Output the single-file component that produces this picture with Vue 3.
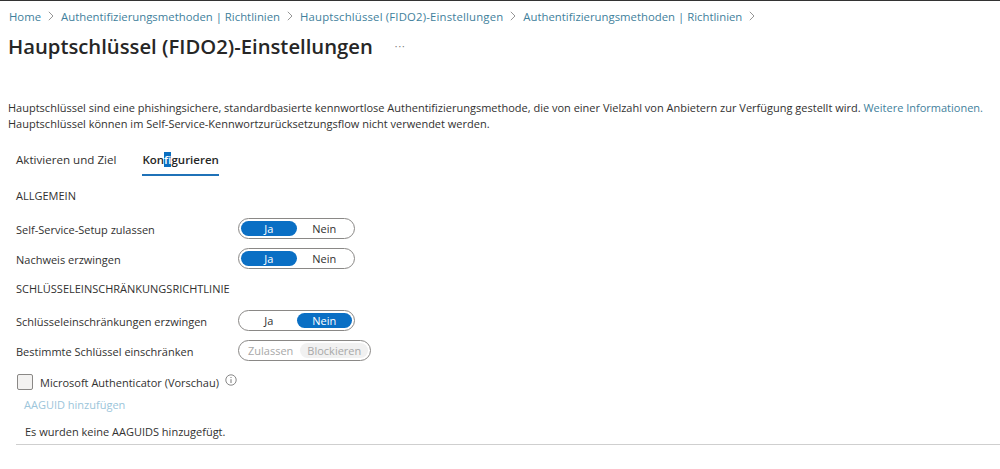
<template>
  <div class="page">
    <nav class="crumbs">
      <template v-for="c in crumbs" :key="c.id">
        <a class="crumb">{{ c.label }}</a>
        <svg class="chev" width="6" height="10" viewBox="0 0 6 10"><path d="M0.8 0.8 L5 5 L0.8 9.2" fill="none" stroke="#8a8a8a" stroke-width="0.9" /></svg>
      </template>
    </nav>
    <div class="title-row">
      <h1>Hauptschlüssel (FIDO2)-Einstellungen</h1>
      <span class="more">···</span>
    </div>
    <p class="intro">
      Hauptschlüssel sind eine phishingsichere, standardbasierte kennwortlose Authentifizierungsmethode, die von einer Vielzahl von Anbietern zur Verfügung gestellt wird.
      <a>Weitere Informationen.</a><br />
      Hauptschlüssel können im Self-Service-Kennwortzurücksetzungsflow nicht verwendet werden.
    </p>
    <div class="tabs">
      <div class="tab">Aktivieren und Ziel</div>
      <div class="tab active">Kon<span class="sel">f</span>igurieren</div>
    </div>
    <div class="section first">ALLGEMEIN</div>
    <div class="row" v-for="r in general" :key="r">
      <span class="label">{{ r }}</span>
      <div class="toggle">
        <span class="opt on">Ja</span><span class="opt">Nein</span>
      </div>
    </div>
    <div class="section second">SCHLÜSSELEINSCHRÄNKUNGSRICHTLINIE</div>
    <div class="row">
      <span class="label">Schlüsseleinschränkungen erzwingen</span>
      <div class="toggle">
        <span class="opt">Ja</span><span class="opt on">Nein</span>
      </div>
    </div>
    <div class="row">
      <span class="label">Bestimmte Schlüssel einschränken</span>
      <div class="toggle disabled">
        <span class="opt">Zulassen</span><span class="opt on">Blockieren</span>
      </div>
    </div>
    <div class="check-row">
      <span class="box"></span>
      <span class="check-label">Microsoft Authenticator (Vorschau)</span>
      <svg class="info" width="12" height="12" viewBox="0 0 12 12">
        <circle cx="6" cy="6" r="5.2" fill="none" stroke="#6a6a6a" stroke-width="0.8" />
        <path d="M6 5.2 V9 M6 3 V4" stroke="#6a6a6a" stroke-width="0.9" fill="none" />
      </svg>
    </div>
    <a class="add">AAGUID hinzufügen</a>
    <div class="empty">Es wurden keine AAGUIDS hinzugefügt.</div>
  </div>
</template>

<script setup>
const crumbs = [
  { id: 1, label: "Home" },
  { id: 2, label: "Authentifizierungsmethoden | Richtlinien" },
  { id: 3, label: "Hauptschlüssel (FIDO2)-Einstellungen" },
  { id: 4, label: "Authentifizierungsmethoden | Richtlinien" },
];
const general = ["Self-Service-Setup zulassen", "Nachweis erzwingen"];
</script>

<style>
html,
body {
  background: #fff;
  overflow: hidden;
}
</style>

<style scoped>
.page {
  width: 1000px;
  height: 469px;
  box-sizing: border-box;
  border-top: 1px solid #333;
  font-family: "Open Sans", "Noto Sans", sans-serif;
  font-size: 11px;
  color: #323130;
  overflow: hidden;
}
.crumbs {
  display: flex;
  align-items: center;
  padding: 8px 0 0 9px;
  height: 14px;
  font-size: 11.35px;
  color: #3f7f9c;
}
.crumb:nth-of-type(3) {
  letter-spacing: 0.17px;
}
.chev {
  margin: 0 7px 0 7px;
}
.title-row {
  display: flex;
  align-items: center;
  margin: 8px 0 0 8px;
  height: 30px;
}
h1 {
  margin: 0;
  font-size: 20.25px;
  font-weight: 600;
  color: #262626;
}
.more {
  margin-left: 22px;
  font-size: 10px;
  letter-spacing: 1px;
  color: #777;
}
.intro {
  margin: 39px 0 0 8px;
  line-height: 16px;
  white-space: nowrap;
}
.intro a {
  color: #3f7f9c;
}
.tabs {
  display: flex;
  margin: 19px 0 0 16px;
  height: 28px;
  gap: 26px;
  font-size: 11.6px;
}
.tab {
  height: 23px;
  line-height: 18px;
}
.tab.active {
  font-weight: 600;
  font-size: 11.5px;
  color: #262626;
  border-bottom: 2px solid #1f72b8;
}
.sel {
  background: #0a6fc0;
  color: #fff;
}
.section {
  margin-left: 16px;
  height: 15px;
  line-height: 15px;
}
.first {
  margin-top: 9px;
}
.second {
  margin-top: 7px;
}
.row {
  display: flex;
  align-items: center;
  margin-left: 16px;
  height: 30px;
}
.first + .row {
  margin-top: 11px;
}
.second + .row {
  margin-top: 10px;
}
.label {
  width: 222px;
}
.toggle {
  display: flex;
  box-sizing: border-box;
  height: 21px;
  margin-bottom: 2px;
  padding: 2px;
  border: 1px solid #8a8886;
  border-radius: 11px;
}
.opt {
  width: 55.5px;
  text-align: center;
  line-height: 15px;
  border-radius: 8px;
}
.opt.on {
  background: #0a6fc4;
  color: #fff;
}
.disabled {
  color: #a8a8a8;
}
.disabled .opt {
  width: auto;
  padding: 0 7px;
}
.disabled .opt.on {
  background: #f1f1f1;
  color: #a8a8a8;
}
.check-row {
  display: flex;
  align-items: center;
  margin: 6px 0 0 17px;
  height: 20px;
}
.box {
  box-sizing: border-box;
  width: 16px;
  height: 16px;
  border: 1px solid #8a8886;
  border-radius: 2px;
  background: #f3f2f1;
}
.check-label {
  margin-left: 7px;
}
.info {
  margin: 0 0 4px 6px;
}
.add {
  display: block;
  margin: 5px 0 0 24px;
  color: #9cc5da;
}
.empty {
  margin: 12px 0 0 16px;
  padding: 0 0 5px 9px;
  width: 984px;
  box-sizing: border-box;
  border-bottom: 1px solid #cfcfcf;
}
</style>
